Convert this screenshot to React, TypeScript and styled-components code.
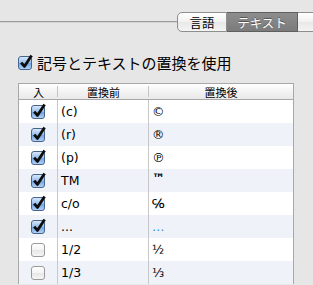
import styled, { createGlobalStyle } from 'styled-components'

const GlobalStyle = createGlobalStyle`
  html, body {
    margin: 0;
    padding: 0;
    background: #e6e6e6;
    overflow: hidden;
  }
  body {
    width: 313px;
    height: 285px;
    font-family: 'DejaVu Sans', 'Noto Sans CJK JP', sans-serif;
    color: #000;
  }
`

const Page = styled.div`
  width: 313px;
  height: 285px;
  overflow: hidden;
`

const TabRow = styled.div`
  display: flex;
  align-items: center;
  padding-top: 12px;
  height: 20px;
  width: 360px;
`

const Rule = styled.div`
  width: 177px;
  height: 1px;
  margin-top: -2px;
  background: #9c9c9c;
  box-shadow: 0 1px 0 #d4d4d4;
`

interface ITabProps {
  selected?: boolean
  first?: boolean
  width: number
}

const Tab = styled.div<ITabProps>`
  flex: none;
  box-sizing: border-box;
  width: ${(props) => props.width}px;
  height: 20px;
  display: flex;
  align-items: center;
  justify-content: center;
  font-family: 'Noto Sans CJK JP', sans-serif;
  font-size: 12.5px;
  color: ${(props) => (props.selected ? '#fff' : '#000')};
  background: ${(props) =>
    props.selected
      ? 'linear-gradient(#8d8d8d, #7b7b7b)'
      : 'linear-gradient(#ffffff, #f1f1f1 50%, #e8e8e8 51%, #f4f4f4)'};
  border: 1px solid ${(props) => (props.selected ? '#5f5f5f' : '#8e8e8e')};
  border-left-width: ${(props) => (props.first ? 1 : 0)}px;
  border-radius: ${(props) => (props.first ? '5px 0 0 5px' : '0')};
  text-shadow: ${(props) => (props.selected ? '0 -1px 0 #555' : 'none')};
`

const Option = styled.label`
  display: flex;
  align-items: center;
  gap: 3px;
  margin: 22px 0 0 17px;
  height: 16px;
  font-family: 'Noto Sans CJK JP', sans-serif;
  font-size: 15px;
`

const Table = styled.div`
  margin: 13px 0 0 18px;
  width: 276px;
  box-sizing: border-box;
  border: 1px solid #a8a8a8;
  border-bottom: none;
  background: #fff;
`

const Grid = styled.div`
  display: grid;
  grid-template-columns: 39px 91px 1fr;
`

const HeadCell = styled.div<{ last?: boolean }>`
  height: 15px;
  display: flex;
  align-items: center;
  justify-content: center;
  font-family: 'Noto Sans CJK JP', sans-serif;
  font-size: 11px;
  background: linear-gradient(#ffffff, #f2f2f2 55%, #e9e9e9);
  border-bottom: 1px solid #a8a8a8;
  position: relative;
  &::after {
    content: '';
    display: ${(props) => (props.last ? 'none' : 'block')};
    position: absolute;
    right: 0;
    top: 2px;
    bottom: 2px;
    width: 1px;
    background: #c4c4c4;
  }
`

const Cell = styled.div<{ striped: boolean; last?: boolean; center?: boolean }>`
  height: 23px;
  display: flex;
  align-items: center;
  justify-content: ${(props) => (props.center ? 'center' : 'flex-start')};
  padding-left: ${(props) => (props.center ? 0 : 3)}px;
  background: ${(props) => (props.striped ? '#eff3f9' : '#fff')};
  border-right: ${(props) => (props.last ? 'none' : '1px solid #c8c8c8')};
  font-size: 12.5px;
  white-space: nowrap;
`

const Replaced = styled.span<{ tint?: string; small?: boolean }>`
  color: ${(props) => props.tint || '#000'};
  font-size: ${(props) => (props.small ? 13 : 12.5)}px;
  font-weight: ${(props) => (props.small ? 700 : 400)};
  position: relative;
  top: ${(props) => (props.small ? -2 : 0)}px;
`

const CheckBox = ({ checked }: { checked: boolean }) =>
  checked ? (
    <svg width={17} height={17} viewBox="0 0 17 17" style={{ flex: 'none' }}>
      <defs>
        <linearGradient id="cbOn" x1="0" y1="0" x2="0" y2="1">
          <stop offset="0" stopColor="#dfeafa" />
          <stop offset="0.5" stopColor="#93bcec" />
          <stop offset="0.51" stopColor="#6fa3e2" />
          <stop offset="1" stopColor="#b6d4f7" />
        </linearGradient>
      </defs>
      <rect x="1.5" y="2.5" width="13" height="13" rx="2.5" fill="url(#cbOn)" stroke="#45648e" />
      <path d="M4.2 8.6 L7.4 12.4 L14.6 1.4" fill="none" stroke="#0d0d0d" strokeWidth="2.8" strokeLinejoin="round" />
    </svg>
  ) : (
    <svg width={17} height={17} viewBox="0 0 17 17" style={{ flex: 'none' }}>
      <defs>
        <linearGradient id="cbOff" x1="0" y1="0" x2="0" y2="1">
          <stop offset="0" stopColor="#ffffff" />
          <stop offset="0.5" stopColor="#f3f3f3" />
          <stop offset="0.51" stopColor="#e6e6e6" />
          <stop offset="1" stopColor="#f7f7f7" />
        </linearGradient>
      </defs>
      <rect x="1.5" y="2.5" width="13" height="13" rx="2.5" fill="url(#cbOff)" stroke="#9a9a9a" />
    </svg>
  )

const rows = [
  { on: true, from: '(c)', to: '©' },
  { on: true, from: '(r)', to: '®' },
  { on: true, from: '(p)', to: '℗' },
  { on: true, from: 'TM', to: '™', small: true },
  { on: true, from: 'c/o', to: '℅' },
  { on: true, from: '...', to: '…', tint: '#2f8ee0' },
  { on: false, from: '1/2', to: '½' },
  { on: false, from: '1/3', to: '⅓' },
]

export default function App() {
  return (
    <Page>
      <GlobalStyle />
      <TabRow>
        <Rule />
        <Tab first width={50}>言語</Tab>
        <Tab selected width={71}>テキスト</Tab>
        <Tab width={60}>地域</Tab>
      </TabRow>
      <Option>
        <CheckBox checked />
        記号とテキストの置換を使用
      </Option>
      <Table>
        <Grid>
          <HeadCell>入</HeadCell>
          <HeadCell>置換前</HeadCell>
          <HeadCell last>置換後</HeadCell>
          {rows.map((r, i) => (
            <>
              <Cell key={`a${i}`} striped={i % 2 === 1} center>
                <CheckBox checked={r.on} />
              </Cell>
              <Cell key={`b${i}`} striped={i % 2 === 1}>
                {r.from}
              </Cell>
              <Cell key={`c${i}`} striped={i % 2 === 1} last>
                <Replaced tint={r.tint} small={r.small}>
                  {r.to}
                </Replaced>
              </Cell>
            </>
          ))}
        </Grid>
      </Table>
    </Page>
  )
}
